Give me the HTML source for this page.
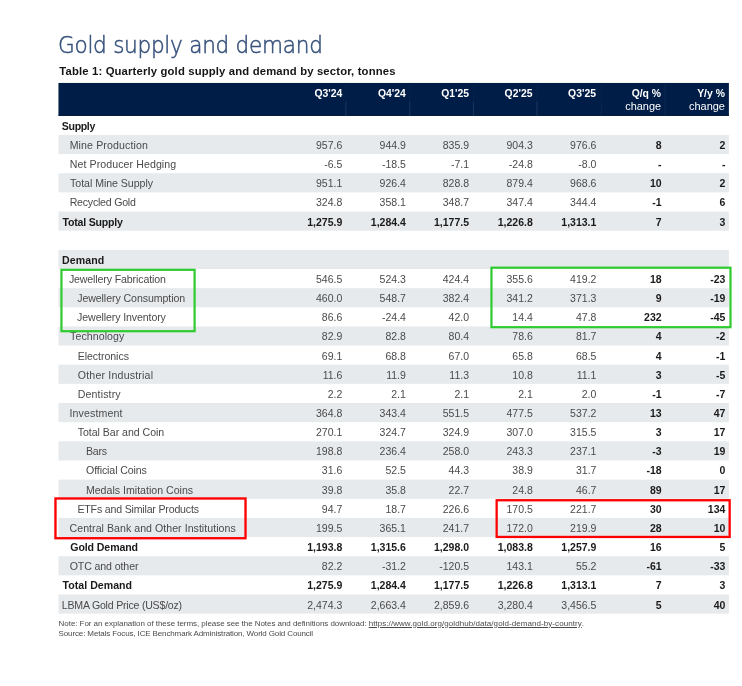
<!DOCTYPE html>
<html lang="en"><head><meta charset="utf-8"><title>Gold supply and demand</title>
<style>
html,body{margin:0;padding:0;background:#fff;}
body{will-change:transform;width:742px;height:686px;position:relative;overflow:hidden;font-family:"Liberation Sans",sans-serif;}
.abs{position:absolute;white-space:nowrap;}
h1{position:absolute;margin:0;left:58.0px;top:30.2px;font-family:"DejaVu Sans","Liberation Sans",sans-serif;font-weight:200;transform:scaleX(0.927);transform-origin:0 0;-webkit-text-stroke:0.5px #36517b;font-size:23.3px;line-height:30px;color:#36517b;letter-spacing:-0.3px;white-space:nowrap;}
.sub{left:59.3px;top:64.0px;font-weight:700;font-size:11.3px;line-height:14px;color:#151515;letter-spacing:0.15px;}
.hd{left:58.5px;top:83.0px;width:670.4px;height:32.8px;}
.hc{position:absolute;top:3.7px;text-align:right;color:#fff;font-size:10.4px;line-height:13.4px;font-weight:700;letter-spacing:0.0px;white-space:nowrap;}
.hc span{font-weight:400;font-size:10.95px;letter-spacing:0px;}
.r{position:absolute;left:58.5px;width:670.4px;height:19.148px;font-size:11.0px;line-height:21.748px;color:#4a4a4a;letter-spacing:0.0px;white-space:nowrap;}
.r b,.r .k{font-weight:700;color:#1a1a1a;}
.l{position:absolute;top:0;font-size:10.6px;}
.n{position:absolute;top:0;text-align:right;font-size:10.5px;}
.note{left:58.6px;top:617.6px;font-size:8.0px;line-height:10.9px;color:#4a4a4a;letter-spacing:0px;}
.note u{text-decoration:underline;text-underline-offset:1px;}
</style></head><body>
<h1>Gold supply and demand</h1>
<div class="abs sub">Table 1: Quarterly gold supply and demand by sector, tonnes</div>
<svg class="abs" style="left:0;top:0" width="742" height="686" viewBox="0 0 742 686">
<rect x="58.45" y="82.95" width="670.45" height="32.85" fill="#001d47"/>
<rect x="58.45" y="114.80" width="670.45" height="1.0" fill="#00143a"/>
<rect x="345.20" y="82.95" width="1.2" height="18.90" fill="#04214c"/>
<rect x="345.20" y="101.85" width="1.2" height="13.95" fill="#19325c"/>
<rect x="409.10" y="82.95" width="1.2" height="18.90" fill="#04214c"/>
<rect x="409.10" y="101.85" width="1.2" height="13.95" fill="#19325c"/>
<rect x="472.90" y="82.95" width="1.2" height="18.90" fill="#04214c"/>
<rect x="472.90" y="101.85" width="1.2" height="13.95" fill="#19325c"/>
<rect x="536.40" y="82.95" width="1.2" height="18.90" fill="#04214c"/>
<rect x="536.40" y="101.85" width="1.2" height="13.95" fill="#19325c"/>
<rect x="600.70" y="82.95" width="1.2" height="18.90" fill="#04214c"/>
<rect x="600.70" y="101.85" width="1.2" height="13.95" fill="#0a2650"/>
<rect x="664.60" y="82.95" width="1.2" height="32.85" fill="#0a2650"/>
<rect x="58.45" y="134.95" width="670.45" height="19.148" fill="#e7eaed"/>
<rect x="58.45" y="173.24" width="670.45" height="19.148" fill="#e7eaed"/>
<rect x="58.45" y="211.54" width="670.45" height="19.148" fill="#e7eaed"/>
<rect x="58.45" y="249.84" width="670.45" height="19.148" fill="#e7eaed"/>
<rect x="58.45" y="288.13" width="670.45" height="19.148" fill="#e7eaed"/>
<rect x="58.45" y="326.43" width="670.45" height="19.148" fill="#e7eaed"/>
<rect x="58.45" y="364.72" width="670.45" height="19.148" fill="#e7eaed"/>
<rect x="58.45" y="403.02" width="670.45" height="19.148" fill="#e7eaed"/>
<rect x="58.45" y="441.32" width="670.45" height="19.148" fill="#e7eaed"/>
<rect x="58.45" y="479.61" width="670.45" height="19.148" fill="#e7eaed"/>
<rect x="58.45" y="517.91" width="670.45" height="19.148" fill="#e7eaed"/>
<rect x="58.45" y="556.20" width="670.45" height="19.148" fill="#e7eaed"/>
<rect x="58.45" y="594.50" width="670.45" height="19.148" fill="#e7eaed"/>
</svg>
<div class="abs hd">
<div class="hc" style="right:386.50px">Q3'24</div>
<div class="hc" style="right:323.00px">Q4'24</div>
<div class="hc" style="right:259.80px">Q1'25</div>
<div class="hc" style="right:196.40px">Q2'25</div>
<div class="hc" style="right:132.90px">Q3'25</div>
<div class="hc" style="right:67.80px">Q/q %<br><span>change</span></div>
<div class="hc" style="right:4.00px">Y/y %<br><span>change</span></div>
</div>
<div class="r" style="top:115.800px">
<b class="l" style="left:3.33px;letter-spacing:-0.370px">Supply</b>
</div>
<div class="r g" style="top:134.948px">
<span class="l" style="left:11.19px;letter-spacing:0.111px">Mine Production</span>
<span class="n" style="right:386.60px">957.6</span>
<span class="n" style="right:323.00px">944.9</span>
<span class="n" style="right:259.90px">835.9</span>
<span class="n" style="right:196.10px">904.3</span>
<span class="n" style="right:132.50px">976.6</span>
<span class="n k" style="right:67.30px">8</span>
<span class="n k" style="right:3.50px">2</span>
</div>
<div class="r" style="top:154.096px">
<span class="l" style="left:11.21px;letter-spacing:0.087px">Net Producer Hedging</span>
<span class="n" style="right:386.60px">-6.5</span>
<span class="n" style="right:323.00px">-18.5</span>
<span class="n" style="right:259.90px">-7.1</span>
<span class="n" style="right:196.10px">-24.8</span>
<span class="n" style="right:132.50px">-8.0</span>
<span class="n k" style="right:67.30px">-</span>
<span class="n k" style="right:3.50px">-</span>
</div>
<div class="r g" style="top:173.244px">
<span class="l" style="left:11.56px;letter-spacing:-0.040px">Total Mine Supply</span>
<span class="n" style="right:386.60px">951.1</span>
<span class="n" style="right:323.00px">926.4</span>
<span class="n" style="right:259.90px">828.8</span>
<span class="n" style="right:196.10px">879.4</span>
<span class="n" style="right:132.50px">968.6</span>
<span class="n k" style="right:67.30px">10</span>
<span class="n k" style="right:3.50px">2</span>
</div>
<div class="r" style="top:192.392px">
<span class="l" style="left:11.21px;letter-spacing:-0.232px">Recycled Gold</span>
<span class="n" style="right:386.60px">324.8</span>
<span class="n" style="right:323.00px">358.1</span>
<span class="n" style="right:259.90px">348.7</span>
<span class="n" style="right:196.10px">347.4</span>
<span class="n" style="right:132.50px">344.4</span>
<span class="n k" style="right:67.30px">-1</span>
<span class="n k" style="right:3.50px">6</span>
</div>
<div class="r g" style="top:211.540px">
<b class="l" style="left:4.08px;letter-spacing:-0.227px">Total Supply</b>
<span class="n k" style="right:386.60px">1,275.9</span>
<span class="n k" style="right:323.00px">1,284.4</span>
<span class="n k" style="right:259.90px">1,177.5</span>
<span class="n k" style="right:196.10px">1,226.8</span>
<span class="n k" style="right:132.50px">1,313.1</span>
<span class="n k" style="right:67.30px">7</span>
<span class="n k" style="right:3.50px">3</span>
</div>
<div class="r" style="top:230.688px">
</div>
<div class="r g" style="top:249.836px">
<b class="l" style="left:3.52px;letter-spacing:0.100px">Demand</b>
</div>
<div class="r" style="top:268.984px">
<span class="l" style="left:10.39px;letter-spacing:-0.126px">Jewellery Fabrication</span>
<span class="n" style="right:386.60px">546.5</span>
<span class="n" style="right:323.00px">524.3</span>
<span class="n" style="right:259.90px">424.4</span>
<span class="n" style="right:196.10px">355.6</span>
<span class="n" style="right:132.50px">419.2</span>
<span class="n k" style="right:67.30px">18</span>
<span class="n k" style="right:3.50px">-23</span>
</div>
<div class="r g" style="top:288.132px">
<span class="l" style="left:18.68px;letter-spacing:-0.077px">Jewellery Consumption</span>
<span class="n" style="right:386.60px">460.0</span>
<span class="n" style="right:323.00px">548.7</span>
<span class="n" style="right:259.90px">382.4</span>
<span class="n" style="right:196.10px">341.2</span>
<span class="n" style="right:132.50px">371.3</span>
<span class="n k" style="right:67.30px">9</span>
<span class="n k" style="right:3.50px">-19</span>
</div>
<div class="r" style="top:307.280px">
<span class="l" style="left:18.61px;letter-spacing:-0.105px">Jewellery Inventory</span>
<span class="n" style="right:386.60px">86.6</span>
<span class="n" style="right:323.00px">-24.4</span>
<span class="n" style="right:259.90px">42.0</span>
<span class="n" style="right:196.10px">14.4</span>
<span class="n" style="right:132.50px">47.8</span>
<span class="n k" style="right:67.30px">232</span>
<span class="n k" style="right:3.50px">-45</span>
</div>
<div class="r g" style="top:326.428px">
<span class="l" style="left:11.62px;letter-spacing:0.065px">Technology</span>
<span class="n" style="right:386.60px">82.9</span>
<span class="n" style="right:323.00px">82.8</span>
<span class="n" style="right:259.90px">80.4</span>
<span class="n" style="right:196.10px">78.6</span>
<span class="n" style="right:132.50px">81.7</span>
<span class="n k" style="right:67.30px">4</span>
<span class="n k" style="right:3.50px">-2</span>
</div>
<div class="r" style="top:345.576px">
<span class="l" style="left:19.24px;letter-spacing:-0.062px">Electronics</span>
<span class="n" style="right:386.60px">69.1</span>
<span class="n" style="right:323.00px">68.8</span>
<span class="n" style="right:259.90px">67.0</span>
<span class="n" style="right:196.10px">65.8</span>
<span class="n" style="right:132.50px">68.5</span>
<span class="n k" style="right:67.30px">4</span>
<span class="n k" style="right:3.50px">-1</span>
</div>
<div class="r g" style="top:364.724px">
<span class="l" style="left:19.32px;letter-spacing:0.186px">Other Industrial</span>
<span class="n" style="right:386.60px">11.6</span>
<span class="n" style="right:323.00px">11.9</span>
<span class="n" style="right:259.90px">11.3</span>
<span class="n" style="right:196.10px">10.8</span>
<span class="n" style="right:132.50px">11.1</span>
<span class="n k" style="right:67.30px">3</span>
<span class="n k" style="right:3.50px">-5</span>
</div>
<div class="r" style="top:383.872px">
<span class="l" style="left:19.22px;letter-spacing:0.136px">Dentistry</span>
<span class="n" style="right:386.60px">2.2</span>
<span class="n" style="right:323.00px">2.1</span>
<span class="n" style="right:259.90px">2.1</span>
<span class="n" style="right:196.10px">2.1</span>
<span class="n" style="right:132.50px">2.0</span>
<span class="n k" style="right:67.30px">-1</span>
<span class="n k" style="right:3.50px">-7</span>
</div>
<div class="r g" style="top:403.020px">
<span class="l" style="left:10.99px;letter-spacing:0.117px">Investment</span>
<span class="n" style="right:386.60px">364.8</span>
<span class="n" style="right:323.00px">343.4</span>
<span class="n" style="right:259.90px">551.5</span>
<span class="n" style="right:196.10px">477.5</span>
<span class="n" style="right:132.50px">537.2</span>
<span class="n k" style="right:67.30px">13</span>
<span class="n k" style="right:3.50px">47</span>
</div>
<div class="r" style="top:422.168px">
<span class="l" style="left:19.20px;letter-spacing:-0.034px">Total Bar and Coin</span>
<span class="n" style="right:386.60px">270.1</span>
<span class="n" style="right:323.00px">324.7</span>
<span class="n" style="right:259.90px">324.9</span>
<span class="n" style="right:196.10px">307.0</span>
<span class="n" style="right:132.50px">315.5</span>
<span class="n k" style="right:67.30px">3</span>
<span class="n k" style="right:3.50px">17</span>
</div>
<div class="r g" style="top:441.316px">
<span class="l" style="left:27.41px;letter-spacing:-0.182px">Bars</span>
<span class="n" style="right:386.60px">198.8</span>
<span class="n" style="right:323.00px">236.4</span>
<span class="n" style="right:259.90px">258.0</span>
<span class="n" style="right:196.10px">243.3</span>
<span class="n" style="right:132.50px">237.1</span>
<span class="n k" style="right:67.30px">-3</span>
<span class="n k" style="right:3.50px">19</span>
</div>
<div class="r" style="top:460.464px">
<span class="l" style="left:27.55px;letter-spacing:-0.103px">Official Coins</span>
<span class="n" style="right:386.60px">31.6</span>
<span class="n" style="right:323.00px">52.5</span>
<span class="n" style="right:259.90px">44.3</span>
<span class="n" style="right:196.10px">38.9</span>
<span class="n" style="right:132.50px">31.7</span>
<span class="n k" style="right:67.30px">-18</span>
<span class="n k" style="right:3.50px">0</span>
</div>
<div class="r g" style="top:479.612px">
<span class="l" style="left:27.41px;letter-spacing:0.001px">Medals Imitation Coins</span>
<span class="n" style="right:386.60px">39.8</span>
<span class="n" style="right:323.00px">35.8</span>
<span class="n" style="right:259.90px">22.7</span>
<span class="n" style="right:196.10px">24.8</span>
<span class="n" style="right:132.50px">46.7</span>
<span class="n k" style="right:67.30px">89</span>
<span class="n k" style="right:3.50px">17</span>
</div>
<div class="r" style="top:498.760px">
<span class="l" style="left:18.96px;letter-spacing:-0.187px">ETFs and Similar Products</span>
<span class="n" style="right:386.60px">94.7</span>
<span class="n" style="right:323.00px">18.7</span>
<span class="n" style="right:259.90px">226.6</span>
<span class="n" style="right:196.10px">170.5</span>
<span class="n" style="right:132.50px">221.7</span>
<span class="n k" style="right:67.30px">30</span>
<span class="n k" style="right:3.50px">134</span>
</div>
<div class="r g" style="top:517.908px">
<span class="l" style="left:11.09px;letter-spacing:0.036px">Central Bank and Other Institutions</span>
<span class="n" style="right:386.60px">199.5</span>
<span class="n" style="right:323.00px">365.1</span>
<span class="n" style="right:259.90px">241.7</span>
<span class="n" style="right:196.10px">172.0</span>
<span class="n" style="right:132.50px">219.9</span>
<span class="n k" style="right:67.30px">28</span>
<span class="n k" style="right:3.50px">10</span>
</div>
<div class="r" style="top:537.056px">
<b class="l" style="left:11.81px;letter-spacing:-0.110px">Gold Demand</b>
<span class="n k" style="right:386.60px">1,193.8</span>
<span class="n k" style="right:323.00px">1,315.6</span>
<span class="n k" style="right:259.90px">1,298.0</span>
<span class="n k" style="right:196.10px">1,083.8</span>
<span class="n k" style="right:132.50px">1,257.9</span>
<span class="n k" style="right:67.30px">16</span>
<span class="n k" style="right:3.50px">5</span>
</div>
<div class="r g" style="top:556.204px">
<span class="l" style="left:11.15px;letter-spacing:-0.106px">OTC and other</span>
<span class="n" style="right:386.60px">82.2</span>
<span class="n" style="right:323.00px">-31.2</span>
<span class="n" style="right:259.90px">-120.5</span>
<span class="n" style="right:196.10px">143.1</span>
<span class="n" style="right:132.50px">55.2</span>
<span class="n k" style="right:67.30px">-61</span>
<span class="n k" style="right:3.50px">-33</span>
</div>
<div class="r" style="top:575.352px">
<b class="l" style="left:3.99px;letter-spacing:0.030px">Total Demand</b>
<span class="n k" style="right:386.60px">1,275.9</span>
<span class="n k" style="right:323.00px">1,284.4</span>
<span class="n k" style="right:259.90px">1,177.5</span>
<span class="n k" style="right:196.10px">1,226.8</span>
<span class="n k" style="right:132.50px">1,313.1</span>
<span class="n k" style="right:67.30px">7</span>
<span class="n k" style="right:3.50px">3</span>
</div>
<div class="r g" style="top:594.500px">
<span class="l" style="left:3.35px;letter-spacing:-0.223px">LBMA Gold Price (US$/oz)</span>
<span class="n" style="right:386.60px">2,474.3</span>
<span class="n" style="right:323.00px">2,663.4</span>
<span class="n" style="right:259.90px">2,859.6</span>
<span class="n" style="right:196.10px">3,280.4</span>
<span class="n" style="right:132.50px">3,456.5</span>
<span class="n k" style="right:67.30px">5</span>
<span class="n k" style="right:3.50px">40</span>
</div>
<svg class="abs" style="left:0;top:0" width="742" height="686" viewBox="0 0 742 686" fill="none">
<rect x="61.45" y="269.80" width="133.15" height="61.40" stroke="#2ecb2e" stroke-width="2.2"/>
<rect x="491.45" y="267.70" width="239.05" height="59.50" stroke="#2ecb2e" stroke-width="2.2"/>
<rect x="55.47" y="498.48" width="190.05" height="39.75" stroke="#ff0000" stroke-width="2.35"/>
<rect x="496.65" y="500.25" width="233.00" height="36.70" stroke="#ff0000" stroke-width="2.3"/>
</svg>
<div class="abs note" style="top:618.6px"><span style="letter-spacing:-0.055px">Note: For an explanation of these terms, please see the Notes and definitions download: </span><u style="letter-spacing:0.066px">https://www.gold.org/goldhub/data/gold-demand-by-country</u>.</div>
<div class="abs note" style="top:629.2px;letter-spacing:-0.13px">Source: Metals Focus, ICE Benchmark Administration, World Gold Council</div>
</body></html>
